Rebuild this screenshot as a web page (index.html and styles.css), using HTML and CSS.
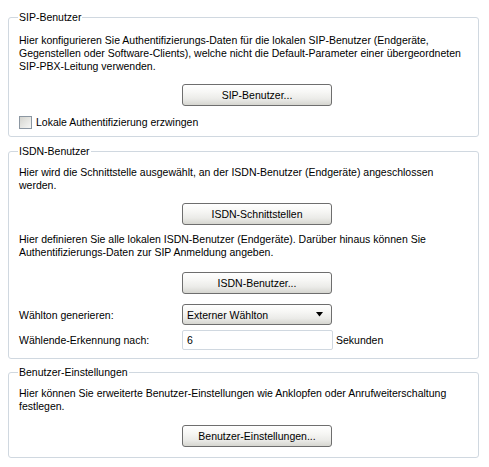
FILE: index.html
```html
<!DOCTYPE html>
<html lang="de">
<head>
<meta charset="utf-8">
<title>Benutzer</title>
<link rel="stylesheet" href="styles.css">
</head>
<body>
<div class="page">
  <fieldset class="group group-sip">
    <legend class="group-title">SIP-Benutzer</legend>
    <p class="desc desc-sip">Hier konfigurieren Sie Authentifizierungs-Daten für die lokalen SIP-Benutzer (Endgeräte,<br>Gegenstellen oder Software-Clients), welche nicht die Default-Parameter einer übergeordneten<br>SIP-PBX-Leitung verwenden.</p>
    <div class="row row-btn btn-sip"><button class="btn" type="button">SIP-Benutzer...</button></div>
    <label class="check-row"><span class="checkbox"></span><span>Lokale Authentifizierung erzwingen</span></label>
  </fieldset>

  <fieldset class="group group-isdn">
    <legend class="group-title">ISDN-Benutzer</legend>
    <p class="desc">Hier wird die Schnittstelle ausgewählt, an der ISDN-Benutzer (Endgeräte) angeschlossen<br>werden.</p>
    <div class="row row-btn btn-if"><button class="btn" type="button">ISDN-Schnittstellen</button></div>
    <p class="desc desc-2">Hier definieren Sie alle lokalen ISDN-Benutzer (Endgeräte). Darüber hinaus können Sie<br>Authentifizierungs-Daten zur SIP Anmeldung angeben.</p>
    <div class="row row-btn btn-isdn"><button class="btn" type="button">ISDN-Benutzer...</button></div>
    <div class="row row-field row-select">
      <span class="label">Wählton generieren:</span>
      <div class="combo"><span class="combo-text">Externer Wählton</span><svg class="combo-arrow" width="8" height="5" viewBox="0 0 8 5"><path d="M0 0H7L3.5 4.5Z" fill="#000"/></svg></div>
    </div>
    <div class="row row-field row-input">
      <span class="label">Wählende-Erkennung nach:</span>
      <div class="textbox">6</div>
      <span class="unit">Sekunden</span>
    </div>
  </fieldset>

  <fieldset class="group group-user">
    <legend class="group-title">Benutzer-Einstellungen</legend>
    <p class="desc">Hier können Sie erweiterte Benutzer-Einstellungen wie Anklopfen oder Anrufweiterschaltung<br>festlegen.</p>
    <div class="row row-btn row-last"><button class="btn" type="button">Benutzer-Einstellungen...</button></div>
  </fieldset>
</div>
</body>
</html>
```

FILE: styles.css
```css
html, body {
  margin: 0;
  padding: 0;
  background: #ffffff;
}
body {
  font-family: "Liberation Sans", Arial, sans-serif;
  font-size: 10.5px;
  color: #000000;
  width: 489px;
  height: 467px;
  overflow: hidden;
}
.page {
  padding-top: 10px;
  display: flex;
  flex-direction: column;
}
.group {
  margin: 0 10px 0 8px;
  width: 471px;
  box-sizing: border-box;
  border: 1px solid #d0d8e0;
  border-radius: 3px;
  padding: 0 10px 7px 10px;
  min-width: 0;
}
.group-isdn {
  margin-top: 7px;
}
.group-user {
  margin-top: 6px;
}
.group-title {
  padding: 0 1px;
  margin-left: -1px;
  line-height: 14px;
  font-size: 10.5px;
}
.desc {
  margin: 8px 0 0 0;
  line-height: 13px;
  white-space: nowrap;
}
.desc-sip {
  margin-top: 10px;
}
.desc-2 {
  margin-top: 8px;
}
.row {
  display: flex;
  align-items: center;
}
.row-btn {
  padding-left: 163px;
  margin-top: 11px;
}
.btn-sip {
  margin-top: 11px;
}
.btn-isdn {
  margin-top: 13px;
}
.row-last {
  margin-top: 12px;
  margin-bottom: 3px;
}
.btn {
  width: 150px;
  height: 22px;
  box-sizing: border-box;
  border: 1px solid #6e6e6e;
  border-radius: 3px;
  background: linear-gradient(to bottom, #ffffff 0%, #f7f7f5 35%, #ebebe8 70%, #d6d6d0 100%);
  font-family: "Liberation Sans", Arial, sans-serif;
  font-size: 10.5px;
  color: #000;
  padding: 0;
  line-height: 20px;
}
.check-row {
  display: flex;
  align-items: center;
  gap: 4px;
  margin-top: 10px;
  line-height: 13px;
}
.checkbox {
  width: 13px;
  height: 13px;
  box-sizing: border-box;
  border: 1px solid #8c97a2;
  background: linear-gradient(135deg, #d4d4cf 0%, #e6e6e2 50%, #f6f6f4 100%);
}
.row-field .label {
  width: 163px;
  flex: none;
}
.row-select {
  margin-top: 10px;
}
.combo {
  width: 150px;
  height: 21px;
  box-sizing: border-box;
  border: 1px solid #6e6e6e;
  border-radius: 3px;
  background: linear-gradient(to bottom, #ffffff 0%, #f7f7f5 35%, #ebebe8 70%, #d6d6d0 100%);
  display: flex;
  align-items: center;
  justify-content: space-between;
  padding: 0 7px 0 4px;
}
.row-input {
  margin-top: 5px;
  margin-bottom: 1px;
}
.textbox {
  width: 151px;
  height: 20px;
  box-sizing: border-box;
  border: 1px solid #d0d8e0;
  border-radius: 2px;
  background: #fff;
  padding-left: 4px;
  line-height: 18px;
}
.unit {
  margin-left: 3px;
}
```
